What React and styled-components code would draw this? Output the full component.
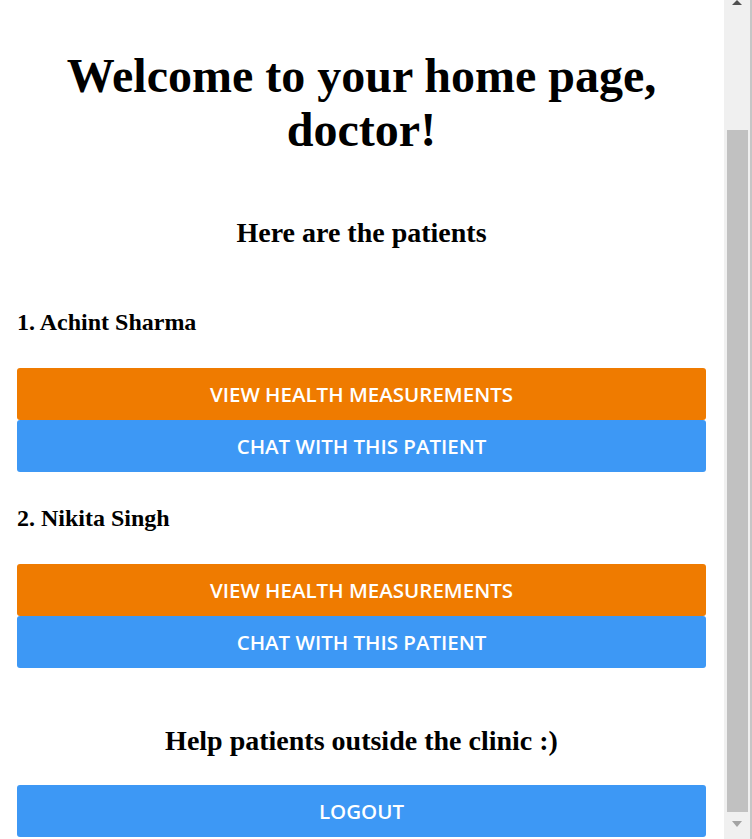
import React from 'react';
import styled, { createGlobalStyle } from 'styled-components';

const GlobalStyle = createGlobalStyle`
  body {
    margin: 0;
    background: #ffffff;
    font-family: 'Liberation Serif', 'Times New Roman', serif;
    color: #000000;
    overflow: hidden;
  }
`;

const Window = styled.div`
  display: flex;
  height: 100vh;
  overflow: hidden;
`;

const Page = styled.main`
  flex: 1;
  display: flex;
  flex-direction: column;
  padding: 0 18px 0 17px;
  overflow: hidden;
`;

const Title = styled.h1`
  margin: 49px 0 0;
  font-size: 48px;
  line-height: 54px;
  font-weight: bold;
  text-align: center;
`;

const SectionTitle = styled.h2`
  margin: ${(p) => p.$margin || '0'};
  font-size: 28px;
  line-height: 32px;
  font-weight: bold;
  text-align: center;
`;

const PatientBlock = styled.section`
  display: flex;
  flex-direction: column;
  margin-top: ${(p) => p.$top}px;
`;

const PatientName = styled.h3`
  margin: 0 0 32px;
  font-size: 24px;
  line-height: 28px;
  font-weight: bold;
`;

const ButtonStack = styled.div`
  display: flex;
  flex-direction: column;
`;

const Button = styled.button`
  display: block;
  flex-shrink: 0;
  width: 100%;
  height: 52px;
  border: none;
  border-radius: 3px;
  background: ${(p) => (p.$variant === 'orange' ? '#ef7b00' : '#3d98f5')};
  color: #ffffff;
  font-family: 'Open Sans', 'Noto Sans', sans-serif;
  font-size: 20.5px;
  font-weight: 600;
  text-transform: uppercase;
  cursor: pointer;
`;

/* the browser's vertical scrollbar, as seen in the screenshot */
const ScrollRail = styled.div`
  flex: 0 0 26px;
  display: flex;
  flex-direction: column;
  align-items: center;
  background: #f0f0f0;
  border-right: 2px solid #c6c6c6;
`;

const Arrow = styled.div`
  flex-shrink: 0;
  width: 0;
  height: 0;
  border-left: 5.5px solid transparent;
  border-right: 5.5px solid transparent;
  ${(p) =>
    p.$up
      ? `border-bottom: 5px solid #505050;`
      : `border-top: 6px solid #a3a3a3; margin-top: 9px;`}
`;

const Thumb = styled.div`
  flex: 0 0 682px;
  width: 21px;
  margin-top: 125px;
  background: #c1c1c1;
`;

const patients = [
  { id: 1, name: 'Achint Sharma', top: 59 },
  { id: 2, name: 'Nikita Singh', top: 32 }
];

export default function App() {
  return (
    <>
      <GlobalStyle />
      <Window>
        <Page>
          <Title>
            Welcome to your home page,
            <br />
            doctor!
          </Title>
          <SectionTitle $margin="60px 0 0">Here are the patients</SectionTitle>
          {patients.map((patient) => (
            <PatientBlock key={patient.id} $top={patient.top}>
              <PatientName>{patient.id}. {patient.name}</PatientName>
              <ButtonStack>
                <Button $variant="orange">View health measurements</Button>
                <Button $variant="blue">Chat with this patient</Button>
              </ButtonStack>
            </PatientBlock>
          ))}
          <SectionTitle $margin="57px 0 28px">Help patients outside the clinic :)</SectionTitle>
          <Button $variant="blue">Logout</Button>
        </Page>
        <ScrollRail>
          <Arrow $up />
          <Thumb />
          <Arrow />
        </ScrollRail>
      </Window>
    </>
  );
}
